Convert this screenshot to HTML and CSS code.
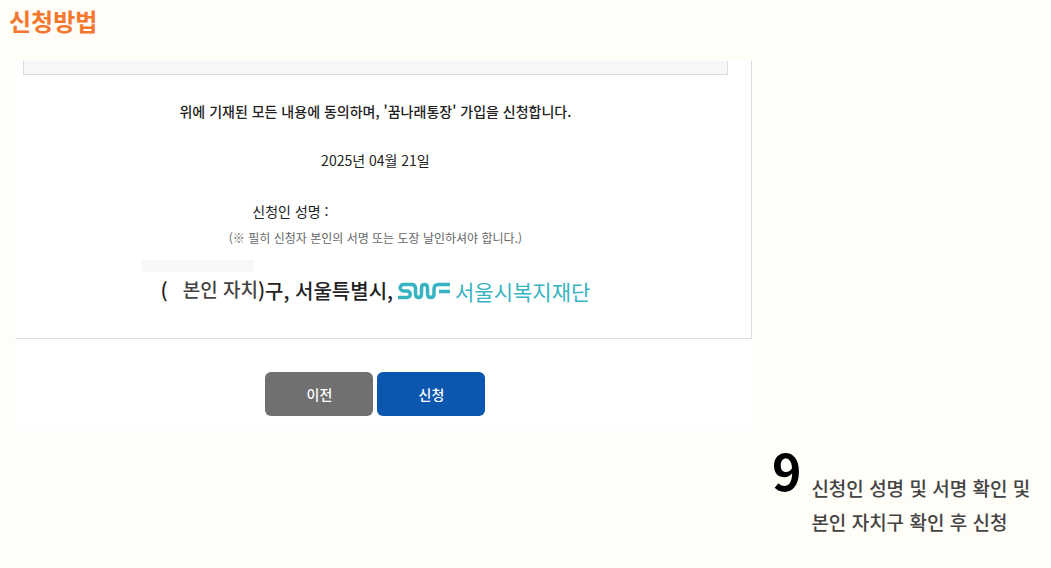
FILE: index.html
```html
<!DOCTYPE html>
<html lang="ko">
  <head>
    <meta charset="UTF-8" />
    <meta name="viewport" content="width=device-width, initial-scale=1.0" />
    <title>신청방법</title>
    <link rel="stylesheet" href="styles.css">
  </head>
  <body>
    <h1>신청방법</h1>
    <main class="guide">
      <form class="panel">
        <div class="document">
          <div class="terms"></div>
          <p class="agree">위에 기재된 모든 내용에 동의하며, '꿈나래통장' 가입을 신청합니다.</p>
          <p class="date">2025년 04월 21일</p>
          <p class="applicant">신청인 성명 :</p>
          <p class="hint">(※ 필히 신청자 본인의 서명 또는 도장 날인하셔야 합니다.)</p>
          <div class="strip"></div>
          <div class="recipient">
            <span class="district"><span>(</span><span class="own">본인 자치</span><span>)구, 서울특별시,</span></span>
            <span class="logo">
              <svg width="54" height="18" viewBox="0 0 54 18" aria-hidden="true">
                <path d="M1 15.500H10a3.250 3.250 0 0 0 0-6.500H6.500a3.250 3.250 0 0 1 0-6.500H14.500q4 0 4 4V12q0 3.500 3 3.500t3-3.500V6q0-3.500 3-3.500t3 3.500V12q0 3.500 3.250 3.500t3.250-3.500V7q0-4.500 4.500-4.500H53M42 9.500H53" />
              </svg>
              <span>서울시복지재단</span>
            </span>
          </div>
        </div>
        <div class="buttons">
          <button type="button" class="prev">이전</button>
          <button type="submit" class="apply">신청</button>
        </div>
      </form>
      <div class="step">
        <span class="number">9</span>
        <p>신청인 성명 및 서명 확인 및<br />본인 자치구 확인 후 신청</p>
      </div>
    </main>
  </body>
</html>
```
FILE: styles.css
```css
* {
  box-sizing: border-box;
}
body {
  margin: 0;
  padding: 3px 15px 20px;
  font-family: "Noto Sans CJK KR", sans-serif;
  background-color: #fffdf7;
  color: #222;
}
h1 {
  margin: 0 0 22px -6px;
  font-size: 24px;
  line-height: 36px;
  color: #f4772f;
}
p {
  margin: 0;
}
.guide {
  display: grid;
  grid-template-columns: 2.79fr 1fr;
  column-gap: 20px;
}
.panel {
  padding-bottom: 15px;
  background: white;
}
.document {
  display: flex;
  flex-direction: column;
  align-items: center;
  padding: 0 23px 30px 8px;
  border-right: 1px solid #ddd;
  border-bottom: 1px solid #ddd;
}
.terms {
  align-self: stretch;
  height: 14px;
  border: 1px solid #ddd;
  border-top: none;
  background: #f7f7f7;
}
.agree {
  margin-top: 24px;
  font-size: 14px;
  font-weight: 500;
  line-height: 24px;
}
.date {
  margin-top: 25px;
  font-size: 14px;
  line-height: 24px;
}
.applicant {
  margin: 27px 170px 0 0;
  font-size: 14px;
  line-height: 24px;
}
.hint {
  margin-top: 3px;
  font-size: 12px;
  line-height: 24px;
  color: #666;
}
.strip {
  width: 112px;
  height: 12px;
  margin: 10px 355px 0 0;
  background: #f7f7f7;
}
.recipient {
  display: flex;
  align-items: center;
  gap: 4px;
  margin-top: 2px;
  font-size: 20px;
  line-height: 34px;
}
.district {
  display: flex;
  font-weight: 500;
}
.own {
  margin-left: 15px;
  font-size: 19px;
  line-height: 30px;
  color: #444;
}
.logo {
  display: flex;
  align-items: center;
  gap: 4px;
  font-size: 21px;
  color: #38b3c1;
}
.logo svg {
  fill: none;
  stroke: #38b3c1;
  stroke-width: 3.5;
}
.buttons {
  display: flex;
  justify-content: center;
  gap: 4px;
  padding: 33px 16px 0 0;
}
.buttons button {
  width: 108px;
  height: 44px;
  padding: 0;
  border: none;
  border-radius: 6px;
  font-family: inherit;
  font-size: 14px;
  font-weight: 500;
  color: white;
  cursor: pointer;
}
.prev {
  background: #707070;
}
.apply {
  background: #0b57b0;
}
.step {
  grid-column: 2;
  grid-row: 2;
  display: flex;
  gap: 10px;
  padding-top: 6px;
}
.number {
  font-size: 50px;
  font-weight: 700;
  line-height: 64px;
  color: black;
}
.step p {
  padding-top: 34px;
  font-size: 19px;
  font-weight: 500;
  line-height: 34px;
  color: #444;
  white-space: nowrap;
}
```
